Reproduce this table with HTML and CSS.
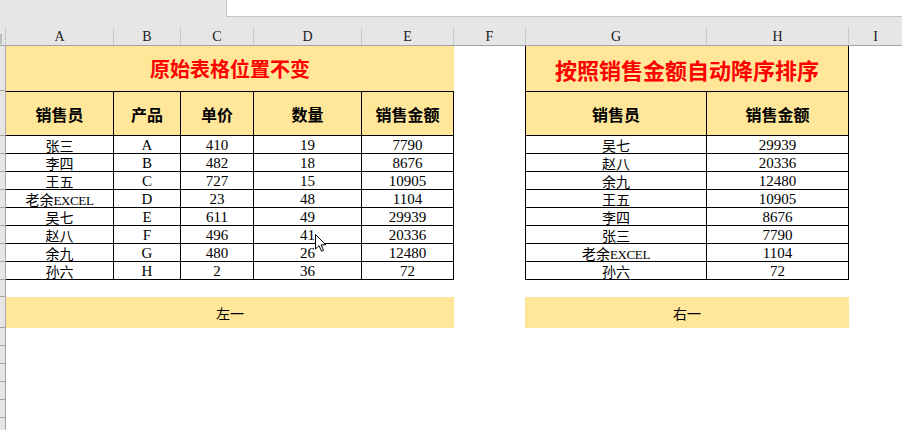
FILE: index.html
```html
<!DOCTYPE html>
<html lang="zh-CN">
<head>
<meta charset="utf-8">
<title>销售金额排序</title>
<link rel="stylesheet" href="styles.css">
</head>
<body>
<div class="topbar"><div class="namebox"></div></div>
<div class="colhead">
  <div class="corner"><span class="corner-mark"></span></div>
  <div class="ch">A</div><div class="ch">B</div><div class="ch">C</div><div class="ch">D</div><div class="ch">E</div>
  <div class="ch ch-f">F</div><div class="ch ch-g">G</div><div class="ch">H</div><div class="ch ch-i">I</div>
</div>
<div class="sheet">
  <!-- title row -->
  <div class="rh"></div>
  <div class="title">原始表格位置不变</div>
  <div></div>
  <div class="title title-r">按照销售金额自动降序排序</div>
  <div></div>
  <!-- header row -->
  <div class="rh"></div>
  <div class="hd">销售员</div><div class="hd">产品</div><div class="hd">单价</div><div class="hd">数量</div><div class="hd">销售金额</div>
  <div></div>
  <div class="hd first-r">销售员</div><div class="hd">销售金额</div>
  <div></div>
  <!-- data rows -->
  <div class="rh"></div><div class="td nm">张三</div><div class="td">A</div><div class="td">410</div><div class="td">19</div><div class="td">7790</div><div></div><div class="td nm first-r">吴七</div><div class="td">29939</div><div></div>
  <div class="rh"></div><div class="td nm">李四</div><div class="td">B</div><div class="td">482</div><div class="td">18</div><div class="td">8676</div><div></div><div class="td nm first-r">赵八</div><div class="td">20336</div><div></div>
  <div class="rh"></div><div class="td nm">王五</div><div class="td">C</div><div class="td">727</div><div class="td">15</div><div class="td">10905</div><div></div><div class="td nm first-r">余九</div><div class="td">12480</div><div></div>
  <div class="rh"></div><div class="td nm">老余<span class="lat">EXCEL</span></div><div class="td">D</div><div class="td">23</div><div class="td">48</div><div class="td">1104</div><div></div><div class="td nm first-r">王五</div><div class="td">10905</div><div></div>
  <div class="rh"></div><div class="td nm">吴七</div><div class="td">E</div><div class="td">611</div><div class="td">49</div><div class="td">29939</div><div></div><div class="td nm first-r">李四</div><div class="td">8676</div><div></div>
  <div class="rh"></div><div class="td nm">赵八</div><div class="td">F</div><div class="td">496</div><div class="td">41</div><div class="td">20336</div><div></div><div class="td nm first-r">张三</div><div class="td">7790</div><div></div>
  <div class="rh"></div><div class="td nm">余九</div><div class="td">G</div><div class="td">480</div><div class="td">26</div><div class="td">12480</div><div></div><div class="td nm first-r">老余<span class="lat">EXCEL</span></div><div class="td">1104</div><div></div>
  <div class="rh"></div><div class="td nm">孙六</div><div class="td">H</div><div class="td">2</div><div class="td">36</div><div class="td">72</div><div></div><div class="td nm first-r">孙六</div><div class="td">72</div><div></div>
  <!-- blank row -->
  <div class="rh"></div><div class="full"></div>
  <!-- label row -->
  <div class="rh"></div>
  <div class="box">左一</div>
  <div></div>
  <div class="box box-r">右一</div>
  <div></div>
  <!-- empty rows -->
  <div class="rh"></div><div class="full"></div>
  <div class="rh"></div><div class="full"></div>
  <div class="rh"></div><div class="full"></div>
  <div class="rh"></div><div class="full"></div>
  <div class="rh"></div><div class="full"></div>
  <div class="rh"></div><div class="full"></div>
</div>
<svg class="cursor" width="13" height="20" viewBox="0 0 13 20" aria-hidden="true">
  <path d="M1.5 1.5 L1.5 16 L5 12.6 L7.6 18.3 L9.6 17.4 L7.1 11.8 L11.8 11.8 Z" fill="#fff" stroke="#000" stroke-width="1" stroke-linejoin="miter"/>
</svg>
</body>
</html>
```
FILE: styles.css
```css
html, body {
  margin: 0;
  padding: 0;
}
body {
  width: 902px;
  height: 430px;
  overflow: hidden;
  background: #ffffff;
  position: relative;
  font-family: "Liberation Serif", "Noto Sans CJK SC", serif;
  color: #000;
}

.topbar {
  height: 28px;
  background: #e6e6e6;
  display: flex;
  justify-content: flex-end;
}
.namebox {
  width: 675px;
  height: 16px;
  background: #ffffff;
  border-left: 1px solid #c6c6c6;
  border-bottom: 1px solid #c6c6c6;
}

.colhead,
.sheet {
  display: grid;
  grid-template-columns: 6px 108px 67px 73px 108px 92px 71px 182px 142px 1fr;
}
.colhead {
  height: 17px;
  background: #e6e6e6;
  border-bottom: 1px solid #a3a3a3;
}
.corner {
  border-right: 1px solid #c8c8c8;
  display: flex;
  align-items: center;
}
.corner-mark {
  width: 2px;
  height: 10px;
  background: #bdbdbd;
  margin-top: 4px;
}
.ch {
  border-right: 1px solid #c8c8c8;
  text-align: center;
  font-family: "Liberation Serif", serif;
  font-size: 14px;
  line-height: 16px;
  padding-top: 1px;
  height: 16px;
  color: #1a1a1a;
}
.ch-f { border-right: none; }
.ch-g { border-left: 1px solid #c8c8c8; }
.ch-i { border-right: none; }

.sheet {
  grid-template-rows: 45px 45px repeat(8, 18px) 17px 31px repeat(6, 18px);
}
.sheet > div {
  box-sizing: border-box;
  min-width: 0;
}
.rh {
  background: #e6e6e6;
  border-right: 1px solid #a8a8a8;
  border-bottom: 1px solid #a3a3a3;
}

.title {
  grid-column: span 5;
  background: #ffe699;
  color: #ff0000;
  font-family: "Noto Sans CJK SC", sans-serif;
  font-weight: 700;
  font-size: 20px;
  line-height: 26px;
  display: flex;
  align-items: center;
  justify-content: center;
  padding-top: 1px;
}
.title-r {
  grid-column: span 2;
  font-size: 22px;
  border-left: 1px solid #000;
  border-right: 1px solid #000;
}

.hd {
  background: #ffe699;
  border-top: 1px solid #000;
  border-right: 1px solid #000;
  border-bottom: 1px solid #000;
  font-family: "Noto Sans CJK SC", sans-serif;
  font-weight: 700;
  font-size: 16px;
  line-height: 22px;
  display: flex;
  align-items: center;
  justify-content: center;
}

.td {
  border-right: 1px solid #000;
  border-bottom: 1px solid #000;
  font-family: "Liberation Serif", "Noto Sans CJK SC", serif;
  font-size: 15px;
  line-height: 16px;
  text-align: center;
  padding-top: 1px;
  white-space: nowrap;
  overflow: hidden;
}
.nm {
  font-family: "Noto Sans CJK SC", sans-serif;
  font-size: 14px;
}
.lat {
  font-family: "Liberation Serif", serif;
  font-size: 13px;
  letter-spacing: -0.4px;
}
.first-r {
  border-left: 1px solid #000;
}

.full {
  grid-column: span 9;
}

.box {
  grid-column: span 5;
  background: #ffe699;
  font-family: "Noto Sans CJK SC", sans-serif;
  font-size: 14px;
  line-height: 20px;
  display: flex;
  align-items: center;
  justify-content: center;
}
.box-r {
  grid-column: span 2;
}

.cursor {
  position: absolute;
  left: 314px;
  top: 233px;
}
```
